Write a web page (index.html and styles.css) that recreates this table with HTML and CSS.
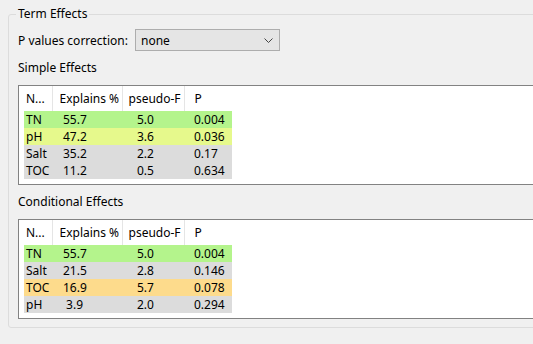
FILE: index.html
```html
<!DOCTYPE html>
<html lang="en">
<head>
  <meta charset="UTF-8">
  <title>Term Effects</title>
  <link rel="stylesheet" href="styles.css">
</head>
<body>
  <fieldset class="group">
    <legend>Term Effects</legend>

    <!-- correction method -->
    <div class="correction">
      <span class="correction-label">P values correction:</span>
      <div class="combo">
        <span>none</span>
        <svg class="chevron" width="9" height="5" viewBox="0 0 9 5">
          <polyline points="0.5,0.5 4.5,4.5 8.5,0.5" fill="none" stroke="#444" stroke-width="1"/>
        </svg>
      </div>
    </div>

    <div class="section-title">Simple Effects</div>
    <div class="view">
      <table class="effects">
        <thead>
          <tr><th>N...</th><th>Explains %</th><th>pseudo-F</th><th>P</th></tr>
        </thead>
        <tbody>
          <tr class="sig-high"><td>TN</td><td>55.7</td><td>5.0</td><td>0.004</td></tr>
          <tr class="sig-mid"><td>pH</td><td>47.2</td><td>3.6</td><td>0.036</td></tr>
          <tr class="sig-none"><td>Salt</td><td>35.2</td><td>2.2</td><td>0.17</td></tr>
          <tr class="sig-none"><td>TOC</td><td>11.2</td><td>0.5</td><td>0.634</td></tr>
        </tbody>
      </table>
    </div>

    <div class="section-title">Conditional Effects</div>
    <div class="view">
      <table class="effects">
        <thead>
          <tr><th>N...</th><th>Explains %</th><th>pseudo-F</th><th>P</th></tr>
        </thead>
        <tbody>
          <tr class="sig-high"><td>TN</td><td>55.7</td><td>5.0</td><td>0.004</td></tr>
          <tr class="sig-none"><td>Salt</td><td>21.5</td><td>2.8</td><td>0.146</td></tr>
          <tr class="sig-low"><td>TOC</td><td>16.9</td><td>5.7</td><td>0.078</td></tr>
          <tr class="sig-none"><td>pH</td><td> 3.9</td><td>2.0</td><td>0.294</td></tr>
        </tbody>
      </table>
    </div>
  </fieldset>
</body>
</html>
```

FILE: styles.css
```css
/* window base */
body {
  margin: 0;
  padding-top: 6px;
  background-color: #f0f0f0;
  font-family: "Noto Sans", "Open Sans", sans-serif;
  font-size: 12px;
  color: #000;
  overflow: hidden;
}
/* group box */
.group {
  margin: 0 0 0 8px;
  padding: 0 0 8px 9px;
  width: 600px;
  min-width: 0;
  border: 1px solid #dcdcdc;
  border-radius: 3px;
}
.group legend {
  padding: 0 2px;
  margin-left: -2px;
  line-height: 16px;
}
/* combo row */
.correction {
  display: flex;
  align-items: center;
  margin-top: 7px;
  height: 22px;
}
.correction-label {
  width: 117px;
}
.combo {
  box-sizing: border-box;
  width: 145px;
  height: 22px;
  padding: 0 6px 0 5px;
  display: flex;
  align-items: center;
  justify-content: space-between;
  background-color: #e5e5e5;
  border: 1px solid #adadad;
}
.section-title {
  margin-top: 9px;
  line-height: 16px;
}
/* table views */
.view {
  box-sizing: border-box;
  height: 100px;
  margin-top: 9px;
  padding-left: 5px;
  background-color: #fff;
  border: 1px solid #828282;
}
.effects {
  border-collapse: collapse;
  table-layout: fixed;
  width: 208px;
}
.effects th, .effects td {
  box-sizing: border-box;
  padding: 0;
  text-align: left;
  white-space: pre;
}
.effects th {
  height: 25px;
  font-weight: normal;
  border-right: 1px solid #e5e5e5;
}
.effects th:last-child {
  border-right: none;
}
.effects td {
  height: 17px;
  line-height: 17px;
}
/* column widths and text offsets */
.effects th:nth-child(1), .effects td:nth-child(1) { width: 28px; padding-left: 2px; }
.effects th:nth-child(2) { width: 70px; padding-left: 7px; }
.effects td:nth-child(2) { padding-left: 11px; }
.effects th:nth-child(3) { width: 62px; padding-left: 6px; }
.effects td:nth-child(3) { padding-left: 15px; }
.effects th:nth-child(4), .effects td:nth-child(4) { width: 48px; padding-left: 10px; }
/* significance colours */
.sig-high { background-color: #b4f48c; }
.sig-mid { background-color: #e6f98c; }
.sig-low { background-color: #fddb8c; }
.sig-none { background-color: #dcdcdc; }
```
